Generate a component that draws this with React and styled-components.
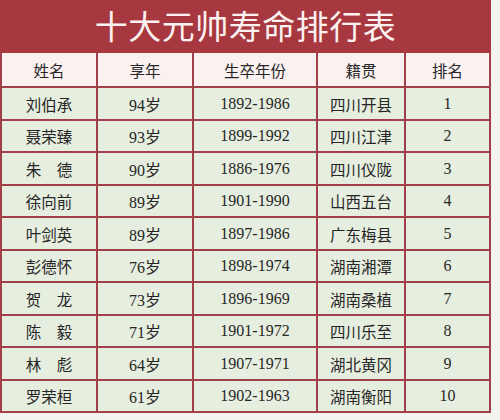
import React from "react";
import styled, { createGlobalStyle } from "styled-components";

const Global = createGlobalStyle`
  html, body { margin: 0; padding: 0; background: #f3f3ef; }
  #root { width: 500px; height: 420px; overflow: hidden; }
`;

const Page = styled.div`
  width: 500px;
  height: 420px;
  background: #f3f3ef;
  font-family: "Liberation Serif", "Noto Sans CJK SC", serif;
`;

const Card = styled.div`
  width: 491px;
`;

const TitleBar = styled.div`
  height: 53px;
  background: #a7383f;
  display: flex;
  align-items: center;
  justify-content: center;
  color: #fbf1f0;
  font-family: "Noto Sans CJK SC", sans-serif;
  font-size: 33px;
  letter-spacing: 0.5px;
  line-height: 1;
  padding-bottom: 2px;
  box-sizing: border-box;
`;

const Grid = styled.div`
  display: grid;
  grid-template-columns: 94px 94px 122px 86px 83px;
  grid-template-rows: 33px;
  grid-auto-rows: 30.5px;
  gap: 2px;
  padding: 0 2px 2px 2px;
  background: #a1404a;
`;

const Cell = styled.div`
  display: flex;
  align-items: center;
  justify-content: center;
  background: ${(p) => (p.$head ? "#faf1f0" : "#e6eee0")};
  color: #262626;
  font-size: ${(p) => (p.$num ? "16px" : "15.5px")};
  white-space: pre;
  padding-top: 1px;
  box-sizing: border-box;
`;

const headers = ["姓名", "享年", "生卒年份", "籍贯", "排名"];

const rows = [
  ["刘伯承", "94岁", "1892-1986", "四川开县", "1"],
  ["聂荣臻", "93岁", "1899-1992", "四川江津", "2"],
  ["朱　德", "90岁", "1886-1976", "四川仪陇", "3"],
  ["徐向前", "89岁", "1901-1990", "山西五台", "4"],
  ["叶剑英", "89岁", "1897-1986", "广东梅县", "5"],
  ["彭德怀", "76岁", "1898-1974", "湖南湘潭", "6"],
  ["贺　龙", "73岁", "1896-1969", "湖南桑植", "7"],
  ["陈　毅", "71岁", "1901-1972", "四川乐至", "8"],
  ["林　彪", "64岁", "1907-1971", "湖北黄冈", "9"],
  ["罗荣桓", "61岁", "1902-1963", "湖南衡阳", "10"],
];

export default function App() {
  return (
    <Page>
      <Global />
      <Card>
        <TitleBar>十大元帅寿命排行表</TitleBar>
        <Grid>
          {headers.map((h) => (
            <Cell key={h} $head>
              {h}
            </Cell>
          ))}
          {rows.map((r) =>
            r.map((v, i) => (
              <Cell key={r[0] + i} $num={i === 1 || i === 2 || i === 4}>
                {v}
              </Cell>
            ))
          )}
        </Grid>
      </Card>
    </Page>
  );
}
